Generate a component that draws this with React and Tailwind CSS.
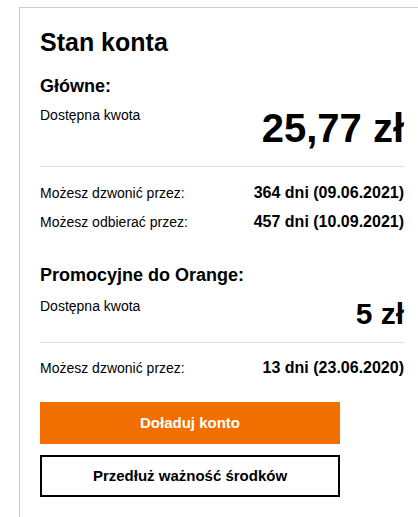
export default function App() {
  const font = { fontFamily: '"Liberation Sans", Arial, sans-serif' };

  return (
    <div className="w-full h-screen overflow-hidden bg-white text-black" style={font}>
      <div className="ml-[19px] mt-[7px] w-[406px] border border-[#cccccc] px-[20px] pt-[19px] pb-[40px]">
        <h1 className="text-[25px] leading-[30px] font-bold">Stan konta</h1>

        <h2 className="mt-[18px] text-[18px] leading-[22px] font-bold">Główne:</h2>
        <div className="mt-[8px] flex items-start justify-between border-b border-[#dddddd] pb-[18px]">
          <span className="text-[14px] leading-[20px]">Dostępna kwota</span>
          <span className="mt-[3px] text-[40px] leading-[40px] font-bold">25,77 zł</span>
        </div>

        <div className="mt-[16px] flex flex-col gap-[9px]">
          <div className="flex items-center justify-between">
            <span className="text-[14px] leading-[20px]">Możesz dzwonić przez:</span>
            <span className="text-[16px] leading-[20px] font-bold">364 dni (09.06.2021)</span>
          </div>
          <div className="flex items-center justify-between">
            <span className="text-[14px] leading-[20px]">Możesz odbierać przez:</span>
            <span className="text-[16px] leading-[20px] font-bold">457 dni (10.09.2021)</span>
          </div>
        </div>

        <h2 className="mt-[32px] text-[18px] leading-[22px] font-bold">Promocyjne do Orange:</h2>
        <div className="mt-[10px] flex items-start justify-between border-b border-[#dddddd] pb-[13px]">
          <span className="text-[14px] leading-[20px]">Dostępna kwota</span>
          <span className="mt-[3px] text-[30px] leading-[30px] font-bold">5 zł</span>
        </div>

        <div className="mt-[15px] flex items-center justify-between">
          <span className="text-[14px] leading-[20px]">Możesz dzwonić przez:</span>
          <span className="text-[16px] leading-[20px] font-bold">13 dni (23.06.2020)</span>
        </div>

        <div className="mt-[24px] flex w-[300px] flex-col gap-[11px]">
          <button className="h-[42px] w-full bg-[#f16e00] text-[15px] font-bold text-white">
            Doładuj konto
          </button>
          <button className="h-[42px] w-full border-2 border-black bg-white text-[15px] font-bold text-black">
            Przedłuż ważność środków
          </button>
        </div>
      </div>
    </div>
  );
}
